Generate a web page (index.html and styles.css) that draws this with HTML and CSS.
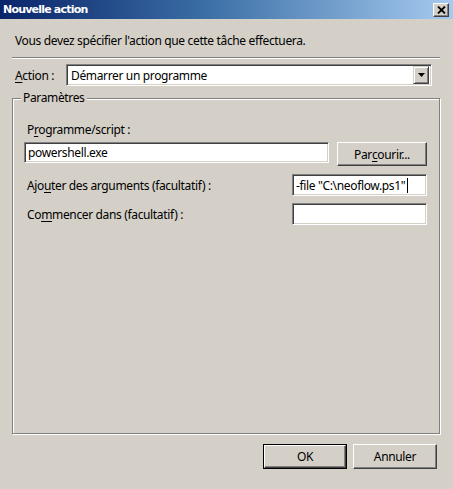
FILE: index.html
```html
<!DOCTYPE html>
<html lang="fr">
<head>
<meta charset="utf-8">
<title>Nouvelle action</title>
<link rel="stylesheet" href="styles.css">
</head>
<body>
<div class="dialog">
  <div class="titlebar">
    <span class="title">Nouvelle action</span>
    <span class="close">
      <svg width="9" height="8" viewBox="0 0 9 8"><path d="M1 0.5 L8 7.5 M8 0.5 L1 7.5" stroke="#000" stroke-width="1.8" fill="none"/></svg>
    </span>
  </div>
  <div class="body">
    <p class="intro">Vous devez spécifier l'action que cette tâche effectuera.</p>
    <div class="sep"></div>
    <div class="action-row">
      <span class="label"><u>A</u>ction :</span>
      <div class="select">
        <span class="select-text">Démarrer un programme</span>
        <span class="drop">
          <svg width="7" height="4" viewBox="0 0 7 4"><path d="M0 0 H7 L3.5 4 Z" fill="#000"/></svg>
        </span>
      </div>
    </div>
    <div class="group">
      <span class="legend">Paramètres</span>
      <div class="label prog-label">P<u>r</u>ogramme/script :</div>
      <div class="prog-row">
        <div class="field wide">powershell.exe</div>
        <div class="btn browse">Par<u>c</u>ourir...</div>
      </div>
      <div class="arg-row">
        <span class="label">Ajo<u>u</u>ter des arguments (facultatif) :</span>
        <div class="field small">-file "C:\neoflow.ps1"<span class="caret"></span></div>
      </div>
      <div class="arg-row">
        <span class="label">Co<u>m</u>mencer dans (facultatif) :</span>
        <div class="field small"></div>
      </div>
    </div>
    <div class="footer">
      <div class="btn default"><span class="btn-inner">OK</span></div>
      <div class="btn">Annuler</div>
    </div>
  </div>
</div>
</body>
</html>
```

FILE: styles.css
```css
html, body {
  margin: 0;
  padding: 0;
}
body {
  width: 453px;
  height: 489px;
  background: #d4d0c8;
  font-family: "Noto Sans", "Open Sans", sans-serif;
  font-size: 12px;
  letter-spacing: -0.35px;
  color: #000;
  overflow: hidden;
}
.dialog {
  width: 453px;
  height: 489px;
  display: flex;
  flex-direction: column;
}
.titlebar {
  height: 19px;
  background: linear-gradient(to right, #0a246a 0%, #3a6ea5 45%, #a6caf0 100%);
  display: flex;
  align-items: center;
  justify-content: space-between;
  padding: 0 4px 0 3px;
}
.title {
  color: #fff;
  font-family: "DejaVu Sans", sans-serif;
  font-weight: bold;
  font-size: 11px;
  letter-spacing: -0.8px;
}
.close {
  width: 14px;
  height: 12px;
  background: #d4d0c8;
  border-top: 1px solid #fff;
  border-left: 1px solid #fff;
  border-right: 1px solid #404040;
  border-bottom: 1px solid #404040;
  box-shadow: inset -1px -1px 0 #808080;
  display: flex;
  align-items: center;
  justify-content: center;
  margin-top: 1px;
}
.body {
  padding: 0 13px 0 12px;
  display: flex;
  flex-direction: column;
}
.intro {
  margin: 14px 0 0 3px;
  line-height: 16px;
  height: 16px;
}
.sep {
  margin-top: 8px;
  border-top: 1px solid #808080;
  border-bottom: 1px solid #fff;
  height: 0;
}
.action-row {
  margin-top: 5px;
  display: flex;
  align-items: center;
  height: 22px;
}
.action-row .label {
  width: 51px;
  padding-left: 3px;
}
.select {
  width: 366px;
  height: 22px;
  box-sizing: border-box;
  background: #fff;
  border-top: 1px solid #808080;
  border-left: 1px solid #808080;
  border-right: 1px solid #fff;
  border-bottom: 1px solid #fff;
  box-shadow: inset 1px 1px 0 #404040, inset -1px -1px 0 #d4d0c8;
  display: flex;
  align-items: center;
  justify-content: space-between;
  padding: 2px;
}
.select-text {
  padding-left: 2px;
}
.drop {
  width: 16px;
  height: 18px;
  box-sizing: border-box;
  background: #d4d0c8;
  border-top: 1px solid #d4d0c8;
  border-left: 1px solid #d4d0c8;
  border-right: 1px solid #404040;
  border-bottom: 1px solid #404040;
  box-shadow: inset 1px 1px 0 #fff, inset -1px -1px 0 #808080;
  display: flex;
  align-items: center;
  justify-content: center;
}
.group {
  position: relative;
  margin-top: 12px;
  height: 336px;
  box-sizing: border-box;
  border: 1px solid #808080;
  box-shadow: inset 1px 1px 0 #fff, 1px 1px 0 #fff;
  padding: 23px 12px 0 11px;
  display: flex;
  flex-direction: column;
}
.legend {
  position: absolute;
  left: 8px;
  top: -9px;
  padding: 0 2px;
  background: #d4d0c8;
  line-height: 16px;
}
.prog-label {
  padding-left: 3px;
  line-height: 16px;
}
.prog-row {
  margin-top: 4px;
  display: flex;
  align-items: flex-start;
  justify-content: space-between;
}
.field {
  height: 22px;
  box-sizing: border-box;
  background: #fff;
  border-top: 1px solid #808080;
  border-left: 1px solid #808080;
  border-right: 1px solid #fff;
  border-bottom: 1px solid #fff;
  box-shadow: inset 1px 1px 0 #404040, inset -1px -1px 0 #d4d0c8;
  padding: 0 3px;
  display: flex;
  align-items: center;
  white-space: nowrap;
}
.wide {
  width: 305px;
  height: 21px;
}
.small {
  width: 135px;
}
.caret {
  display: inline-block;
  width: 1px;
  height: 15px;
  background: #000;
  margin-left: 2px;
}
.btn {
  box-sizing: border-box;
  width: 84px;
  height: 25px;
  background: #d4d0c8;
  border-top: 1px solid #fff;
  border-left: 1px solid #fff;
  border-right: 1px solid #404040;
  border-bottom: 1px solid #404040;
  box-shadow: inset -1px -1px 0 #808080;
  display: flex;
  align-items: center;
  justify-content: center;
}
.browse {
  width: 90px;
  height: 24px;
}
.arg-row {
  margin-top: 8px;
  display: flex;
  align-items: center;
  justify-content: space-between;
  padding-left: 3px;
}
.arg-row + .arg-row {
  margin-top: 7px;
}
.footer {
  margin-top: 10px;
  display: flex;
  justify-content: flex-end;
  gap: 6px;
  padding-right: 3px;
}
.btn.default {
  border: 1px solid #000;
  box-shadow: none;
  padding: 0;
}
.btn-inner {
  box-sizing: border-box;
  width: 100%;
  height: 100%;
  border-top: 1px solid #fff;
  border-left: 1px solid #fff;
  border-right: 1px solid #404040;
  border-bottom: 1px solid #404040;
  box-shadow: inset -1px -1px 0 #808080;
  display: flex;
  align-items: center;
  justify-content: center;
}
u {
  text-decoration: underline;
  text-underline-offset: 2px;
}
```
